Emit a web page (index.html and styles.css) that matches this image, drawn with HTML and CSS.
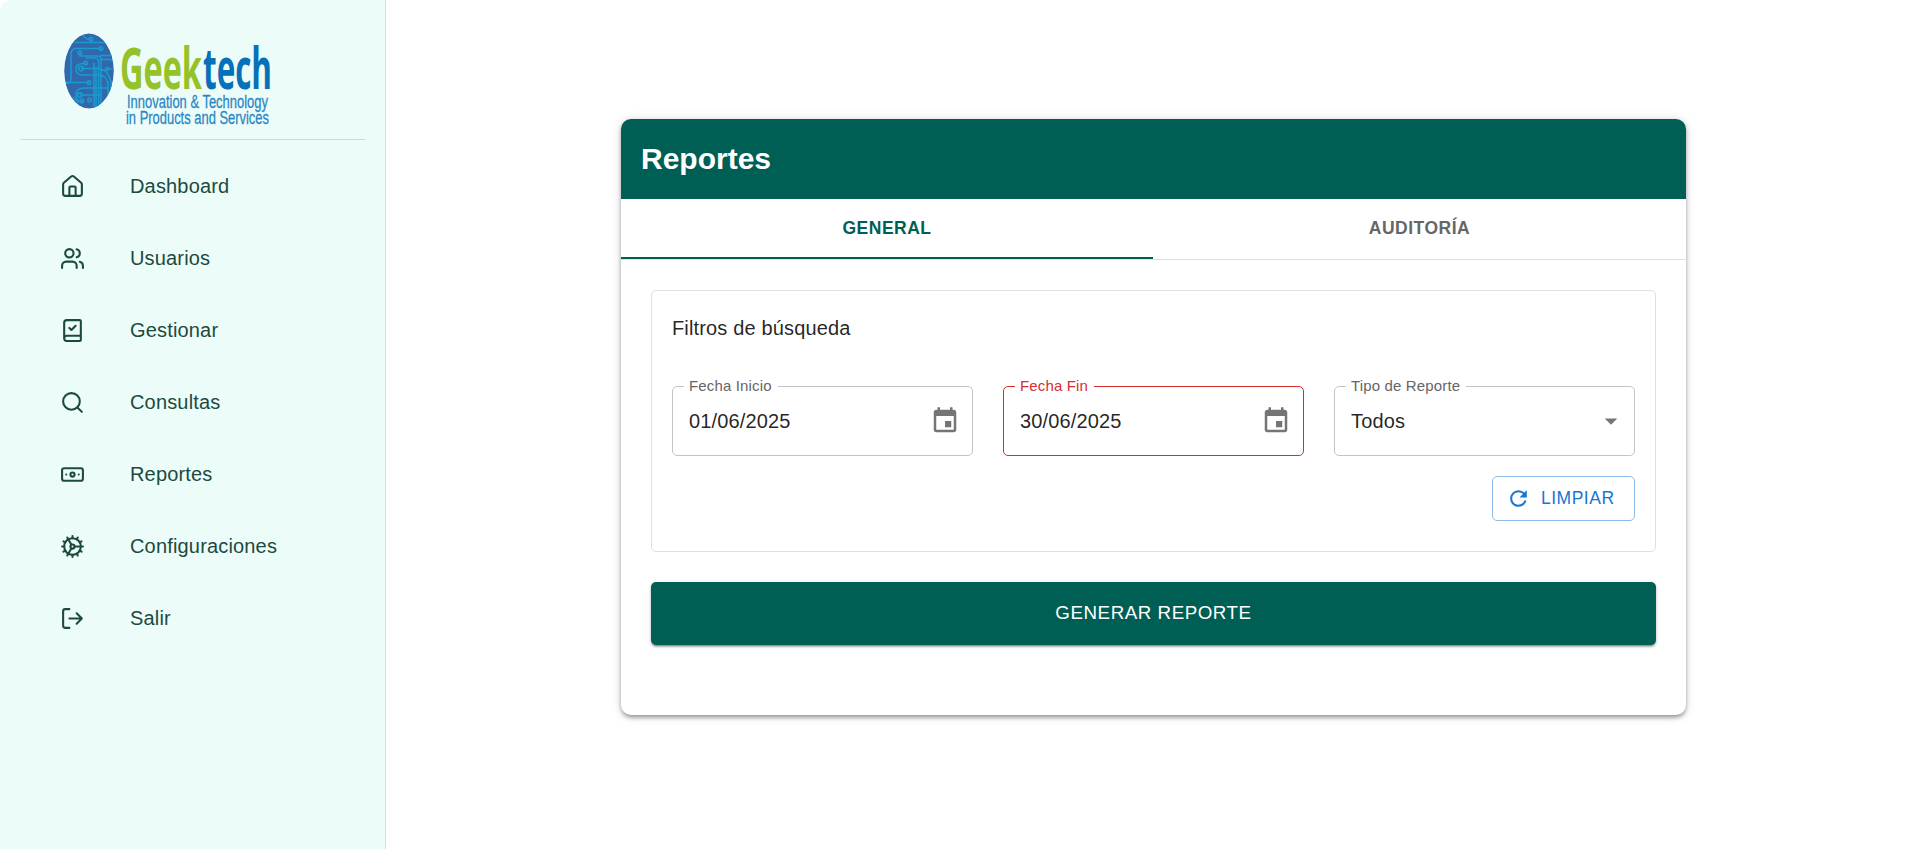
FILE: index.html
```html
<!DOCTYPE html>
<html lang="es">
<head>
<meta charset="utf-8">
<title>Geektech - Reportes</title>
<link rel="stylesheet" href="styles.css">
</head>
<body>
<div class="layout">
  <aside class="sidebar">
    <svg class="logo" width="208" height="94" viewBox="0 0 208 94" role="img" aria-label="Geektech">
      <defs><clipPath id="globe"><ellipse cx="25" cy="38" rx="24.8" ry="37.6"/></clipPath></defs>
      <g clip-path="url(#globe)" fill="none" stroke="#1a9bd0" stroke-width="1.5">
        <ellipse cx="25" cy="38" rx="25" ry="38" fill="#3268ab" stroke="none"/>
        <path d="M18 2l5 4h4M11 9.500h32M37 15.500H12q-5 0-5 6v24q0 5-5 5M16 20v3h17q4 0 4 4v47M21.600 25h9q4 0 4 4v46M21.700 30.500H19q-7 0-7 5.500t6 6h17q9 1 9 10v16M17 35.600h17q8 1 10 6l3 6v20M36 22.500h14M36 26.500h10l3 2M2 49.600h23M43 36h7M44 55H20q-8 0-8 7t7 6M16 62h20M30 30v48M32 34v44M9 64l6 6"/>
        <circle cx="27" cy="6" r="1.800"/><circle cx="37" cy="15.600" r="1.800"/><circle cx="16" cy="19.700" r="1.800"/><circle cx="21.700" cy="30" r="1.800"/><circle cx="17" cy="35.600" r="2.300"/><circle cx="25" cy="49.600" r="1.800"/><circle cx="16" cy="62" r="2.300"/><circle cx="25.600" cy="67" r="1.800"/><circle cx="18" cy="68" r="1.800"/><circle cx="43" cy="36" r="1.600"/>
      </g>
      <text class="logo-name" y="55.500" textLength="82" lengthAdjust="spacingAndGlyphs" x="56"><tspan fill="#95c12b">Geek</tspan></text>
      <text class="logo-name" y="55.500" textLength="69" lengthAdjust="spacingAndGlyphs" x="139"><tspan fill="#0670b8">tech</tspan></text>
      <text class="logo-sub" x="63" y="75.300" textLength="141" lengthAdjust="spacingAndGlyphs">Innovation &amp; Technology</text>
      <text class="logo-sub" x="62" y="90.700" textLength="143" lengthAdjust="spacingAndGlyphs">in Products and Services</text>
    </svg>
    <hr class="divider">
    <nav class="menu">
      <a class="item"><svg class="icon" viewBox="0 0 24 24"><path d="M15 21v-8a1 1 0 0 0-1-1h-4a1 1 0 0 0-1 1v8"/><path d="M3 10a2 2 0 0 1 .709-1.528l7-5.999a2 2 0 0 1 2.582 0l7 5.999A2 2 0 0 1 21 10v9a2 2 0 0 1-2 2H5a2 2 0 0 1-2-2z"/></svg>Dashboard</a>
      <a class="item"><svg class="icon" viewBox="0 0 24 24"><path d="M16 21v-2a4 4 0 0 0-4-4H6a4 4 0 0 0-4 4v2"/><circle cx="9" cy="7" r="4"/><path d="M22 21v-2a4 4 0 0 0-3-3.870"/><path d="M16 3.130a4 4 0 0 1 0 7.750"/></svg>Usuarios</a>
      <a class="item"><svg class="icon" viewBox="0 0 24 24"><path d="M4 19.500v-15A2.500 2.500 0 0 1 6.500 2H19a1 1 0 0 1 1 1v18a1 1 0 0 1-1 1H6.500a1 1 0 0 1 0-5H20"/><path d="m9 9.500 2 2 4-4"/></svg>Gestionar</a>
      <a class="item"><svg class="icon" viewBox="0 0 24 24"><circle cx="11" cy="11" r="8"/><path d="m21 21-4.300-4.300"/></svg>Consultas</a>
      <a class="item"><svg class="icon" viewBox="0 0 24 24"><rect width="20" height="12" x="2" y="6" rx="2"/><circle cx="12" cy="12" r="2"/><path d="M6 12h.01M18 12h.01"/></svg>Reportes</a>
      <a class="item"><svg class="icon" viewBox="0 0 24 24"><path d="M12 20a8 8 0 1 0 0-16 8 8 0 0 0 0 16Z"/><path d="M12 14a2 2 0 1 0 0-4 2 2 0 0 0 0 4Z"/><path d="M12 2v2M12 22v-2M17 20.660l-1-1.730M11 10.270 7 3.340M20.660 17l-1.730-1M3.340 7l1.730 1M14 12h8M2 12h2M20.660 7l-1.730 1M3.340 17l1.730-1M17 3.340l-1 1.730M11 13.730l-4 6.930"/></svg>Configuraciones</a>
      <a class="item"><svg class="icon" viewBox="0 0 24 24"><path d="M9 21H5a2 2 0 0 1-2-2V5a2 2 0 0 1 2-2h4"/><path d="m16 17 5-5-5-5M21 12H9"/></svg>Salir</a>
    </nav>
  </aside>
  <main class="content">
    <section class="card">
      <h1 class="card-title">Reportes</h1>
      <div class="tabs">
        <div class="tab tab-active">GENERAL</div>
        <div class="tab">AUDITORÍA</div>
      </div>
      <div class="card-body">
        <div class="filters">
          <h2 class="filters-title">Filtros de búsqueda</h2>
          <div class="fields">
            <fieldset class="field">
              <legend class="label">Fecha Inicio</legend>
              <div class="value">01/06/2025<svg class="fill-icon" viewBox="0 0 24 24"><path d="M17 12h-5v5h5v-5zM16 1v2H8V1H6v2H5c-1.110 0-1.990.9-1.990 2L3 19c0 1.100.89 2 2 2h14c1.100 0 2-.9 2-2V5c0-1.100-.9-2-2-2h-1V1h-2zm3 18H5V8h14v11z"/></svg></div>
            </fieldset>
            <fieldset class="field field-error">
              <legend class="label">Fecha Fin</legend>
              <div class="value">30/06/2025<svg class="fill-icon" viewBox="0 0 24 24"><path d="M17 12h-5v5h5v-5zM16 1v2H8V1H6v2H5c-1.110 0-1.990.9-1.990 2L3 19c0 1.100.89 2 2 2h14c1.100 0 2-.9 2-2V5c0-1.100-.9-2-2-2h-1V1h-2zm3 18H5V8h14v11z"/></svg></div>
            </fieldset>
            <fieldset class="field field-select">
              <legend class="label">Tipo de Reporte</legend>
              <div class="value">Todos<svg class="fill-icon" viewBox="0 0 24 24"><path d="m7 10 5 5 5-5z"/></svg></div>
            </fieldset>
          </div>
          <button class="clear"><svg class="clear-icon" viewBox="0 0 24 24"><path d="M17.650 6.350C16.200 4.900 14.210 4 12 4c-4.420 0-7.990 3.580-7.990 8s3.570 8 7.990 8c3.730 0 6.840-2.550 7.730-6h-2.080c-.82 2.330-3.040 4-5.650 4-3.310 0-6-2.690-6-6s2.690-6 6-6c1.660 0 3.140.69 4.220 1.780L13 11h7V4l-2.350 2.350z"/></svg>LIMPIAR</button>
        </div>
        <button class="generate">GENERAR REPORTE</button>
      </div>
    </section>
  </main>
</div>
</body>
</html>
```

FILE: styles.css
```css
* { box-sizing: border-box; }
body {
  margin: 0;
  background: #fff;
  color: rgba(0, 0, 0, 0.87);
  font-family: "Liberation Sans", Arial, sans-serif;
  font-size: 20px;
}
.layout { display: flex; height: 849px; overflow: hidden; }

.sidebar {
  width: 386px;
  flex: none;
  border-right: 1px solid #d9dddc;
  background: linear-gradient(#ecfcf9, #ecfcf9) padding-box;
  border-radius: 10px 0 0 0;
  padding: 33px 20px 0;
}
.logo { display: block; margin-left: 44px; overflow: visible; }
.logo-name { font-family: "Open Sans", sans-serif; font-weight: 700; font-size: 58px; }
.logo-sub { font-size: 19px; fill: #2b86c5; stroke: #2b86c5; stroke-width: 0.3px; }
.divider { height: 1px; border: 0; margin: 12px 0 0; background: #ceddda; }
.menu { display: flex; flex-direction: column; padding-top: 10px; }
.item { display: flex; align-items: center; height: 72px; padding-left: 40px; gap: 45px; color: #1d4a40; letter-spacing: 0.170px; }
.icon {
  width: 25px;
  height: 25px;
  fill: none;
  stroke: #1d4a40;
  stroke-width: 2;
  stroke-linecap: round;
  stroke-linejoin: round;
}

.content { flex: 1; display: flex; justify-content: center; padding-top: 119px; padding-right: 15px; }
.card {
  width: 1065px;
  height: 596px;
  margin-left: 25px;
  border-radius: 10px;
  background: #fff;
  overflow: hidden;
  box-shadow: 0 4px 5px -2px rgba(0, 0, 0, 0.2), 0 2px 4px rgba(0, 0, 0, 0.25), 0 1px 12px rgba(0, 0, 0, 0.12);
}
.card-title { margin: 0; height: 80px; padding: 0 20px; background: #005f54; color: #fff; font-size: 30px; line-height: 79px; }
.tabs { display: grid; grid-template-columns: 532px 1fr; height: 61px; border-bottom: 1px solid #e0e0e0; }
.tab {
  border-bottom: 2px solid transparent;
  text-align: center;
  font-size: 17.500px;
  font-weight: 700;
  letter-spacing: 0.5px;
  line-height: 58px;
  color: #666;
}
.tab-active { color: #005f54; border-bottom-color: #005f54; }
.card-body { padding: 30px; }
.filters { display: flex; flex-direction: column; height: 262px; border: 1px solid #e0e0e0; border-radius: 5px; padding: 20px; }
.filters-title { margin: 0; font-size: 20px; font-weight: 400; line-height: 35px; letter-spacing: 0.150px; }
.fields { display: grid; grid-template-columns: repeat(3, 1fr); gap: 30px; margin-top: 32px; }
.field {
  min-width: 0;
  height: 78px;
  margin: 0;
  padding: 0 11px;
  border: 1px solid #c4c4c4;
  border-radius: 5px;
}
.label { height: 17px; padding: 0 6px 0 5px; font-size: 15px; line-height: 15px; letter-spacing: 0.150px; color: #666; }
.value { display: flex; align-items: center; justify-content: space-between; height: 34px; margin-top: 9px; padding-left: 5px; letter-spacing: 0.150px; }
.fill-icon { width: 30px; height: 30px; margin-right: 1px; fill: #757575; }
.field-error { border-color: #d32f2f; }
.field-error .label { color: #d32f2f; }
.field-select .fill-icon { margin-right: -3px; }
.clear {
  display: flex;
  align-items: center;
  align-self: flex-end;
  gap: 10px;
  width: 143px;
  height: 45px;
  margin-top: 20px;
  padding: 0 0 0 13px;
  border: 1px solid #8cbae8;
  border-radius: 5px;
  background: #fff;
  color: #1976d2;
  font: 17.500px "Liberation Sans", Arial, sans-serif;
  letter-spacing: 0.5px;
}
.clear-icon { width: 25px; height: 25px; fill: #1976d2; }
.generate {
  display: block;
  width: 100%;
  height: 63px;
  margin-top: 30px;
  padding: 0 0 2px;
  border: 0;
  border-radius: 5px;
  background: #005f54;
  color: #fff;
  font: 18.750px "Liberation Sans", Arial, sans-serif;
  letter-spacing: 0.536px;
  box-shadow: 0 3px 1px -2px rgba(0, 0, 0, 0.2), 0 2px 2px rgba(0, 0, 0, 0.25), 0 1px 5px rgba(0, 0, 0, 0.12);
}
```
